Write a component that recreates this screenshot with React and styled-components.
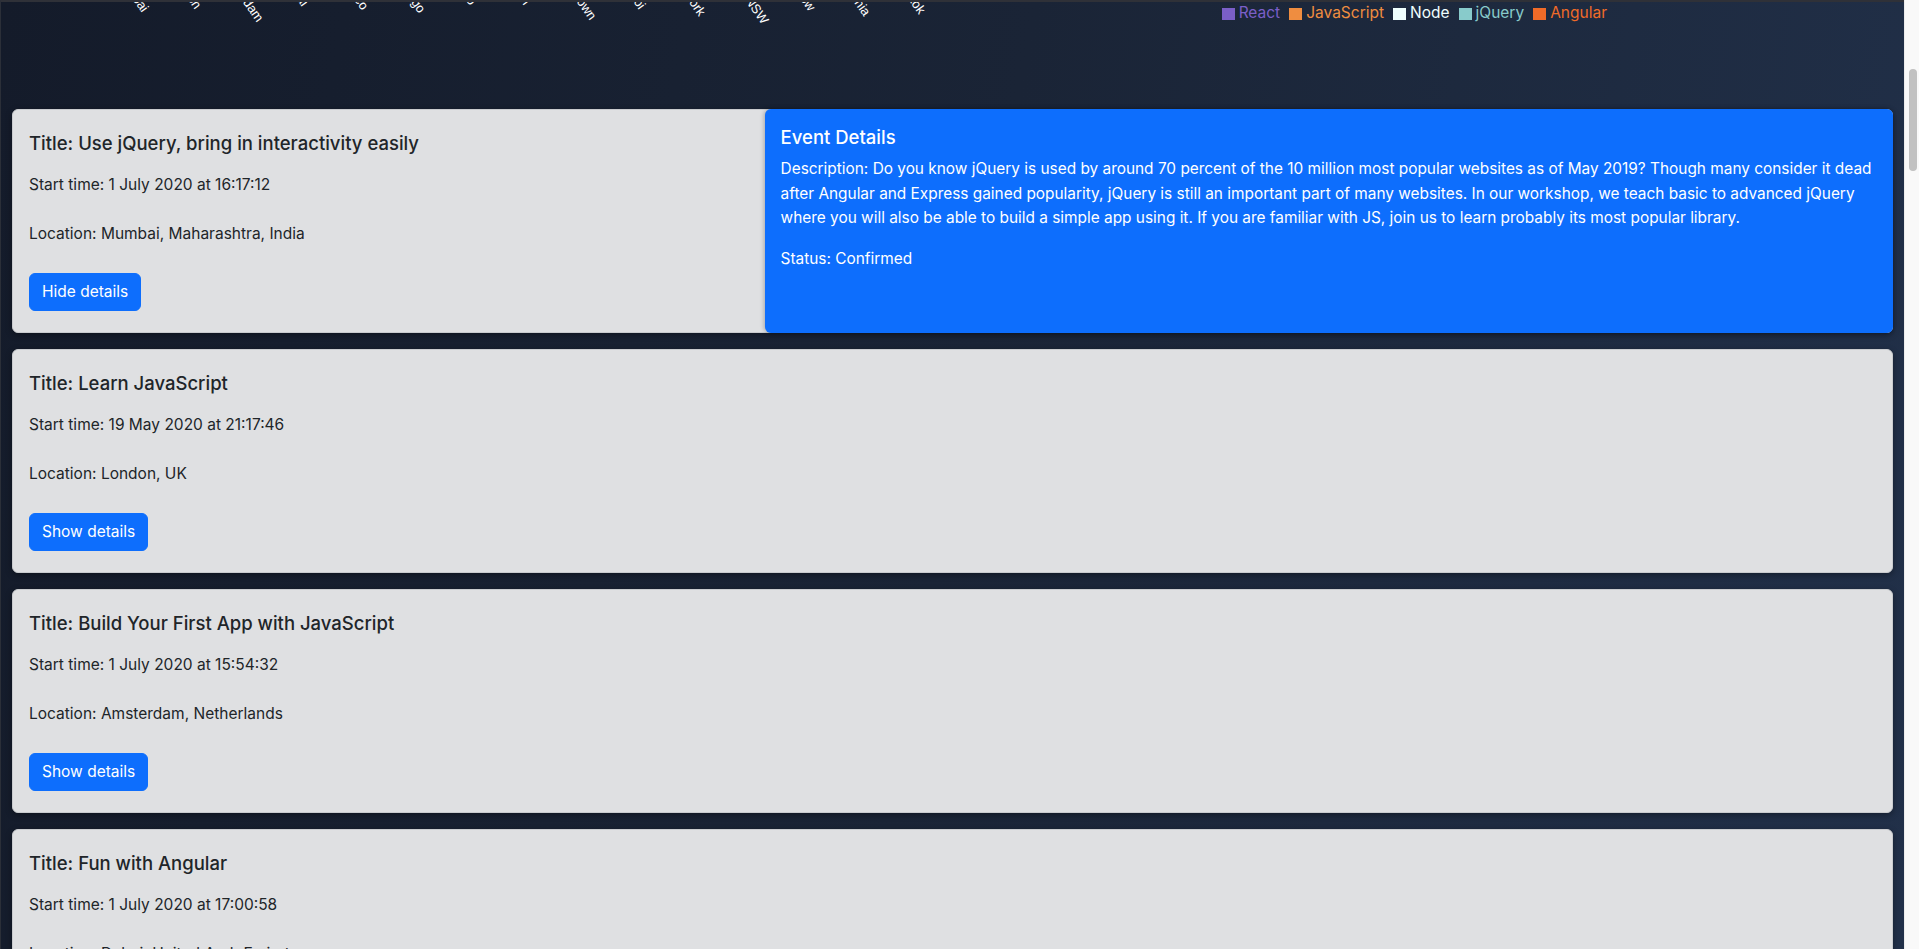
import React, { useState } from 'react'
import styled, { createGlobalStyle } from 'styled-components'

const GlobalStyle = createGlobalStyle`
    html, body {
        margin : 0;
        padding : 0;
        height : 100%;
        overflow : hidden;
    }
    body {
        font-family : Inter, "Noto Sans", "Liberation Sans", sans-serif;
        color : #212529;
    }
`;

const Frame = styled.div`
    display : flex;
    height : 100vh;
`;

const Page = styled.div`
    flex : 1;
    min-width : 0;
    overflow : hidden;
    background : linear-gradient(100deg, #141b2a 0%, #1a2436 50%, #213049 100%);
    border-top : 2px solid #2f3138;
    border-left : 1px solid #2b2f38;
    box-sizing : border-box;
`;

// window scrollbar, page is scrolled a little way down
const ScrollTrack = styled.div`
    flex : 0 0 15px;
    background : #f9f9f9;
    border-left : 1px solid #ececec;
    box-sizing : border-box;
    display : flex;
    justify-content : center;
`;

const ScrollThumb = styled.div`
    width : 8px;
    height : 102px;
    margin-top : 69px;
    margin-left : 2px;
    border-radius : 4px;
    background : #c1c1c1;
`;

const ChartStrip = styled.div`
    display : flex;
    align-items : flex-start;
    height : 107px;
    overflow : hidden;
`;

const AxisSvg = styled.svg`
    flex : 0 0 960px;
    height : 40px;
    display : block;
`;

const AxisLabel = styled.text`
    fill : #ffffff;
    font-size : 13px;
    font-family : "Liberation Sans", Arial, sans-serif;
`;

const Legend = styled.div`
    display : flex;
    align-items : center;
    gap : 9px;
    margin-left : auto;
    margin-right : 297px;
    line-height : 22px;
    font-size : 15.5px;
`;

const LegendItem = styled.span`
    display : flex;
    align-items : center;
    gap : 4px;
    color : ${props => props.color};
`;

const Swatch = styled.span`
    width : 13px;
    height : 12px;
    background : ${props => props.color};
    display : inline-block;
    margin-top : 2px;
`;

const CardList = styled.div`
    display : flex;
    flex-direction : column;
    gap : 16px;
    padding : 0 11px 16px 11px;
`;

const Card = styled.div`
    display : flex;
    background-color : #dfe0e2;
    border : 1px solid #c9cbce;
    border-radius : 6px;
    box-shadow : 0 2px 6px rgba(0, 0, 0, 0.35);
`;

const CardBody = styled.div`
    flex : 0 0 40%;
    padding : 21px 16px;
    box-sizing : border-box;
`;

const Title = styled.h5`
    font-size : 18.5px;
    font-weight : 500;
    line-height : 24px;
    margin : 0 0 18px 0;
`;

const Line = styled.p`
    font-size : 15.5px;
    line-height : 24px;
    margin : 0 0 ${props => props.gap}px 0;
`;

const DetailButton = styled.button`
    font-family : inherit;
    font-size : 15.5px;
    line-height : 24px;
    padding : 6px 12px;
    color : #ffffff;
    background-color : #0d6efd;
    border : 1px solid #0d6efd;
    border-radius : 6px;
    cursor : pointer;
`;

const Details = styled.div`
    flex : 1;
    margin : -1px -1px -1px 0;
    padding : 16px 5px 16px 16px;
    background-color : #0d6efd;
    color : #ffffff;
    border-radius : 6px;
    box-shadow : -1px 0 4px rgba(0, 0, 0, 0.25);
`;

const DetailsTitle = styled.h5`
    font-size : 18.5px;
    font-weight : 500;
    line-height : 24px;
    margin : 0 0 8px 0;
`;

const DetailsText = styled.p`
    font-size : 15.4px;
    line-height : 24.5px;
    margin : 0 0 16px 0;
`;

const cities = [
    ['Mumbai', 141, 11], ['London', 194, 8], ['Amsterdam', 256, 21], ['Dubai', 301, 5],
    ['San Francisco', 361, 9], ['Chicago', 418, 12], ['Toronto', 469, 4], ['Berlin', 523, 4],
    ['Cape Town', 589, 19], ['Hanoi', 638, 8], ['New York', 698, 15], ['Sydney, NSW', 761, 23],
    ['Moscow', 808, 10], ['California', 863, 15], ['Bangkok', 918, 13],
];

const legend = [
    ['React', '#7b5fc8'],
    ['JavaScript', '#ef8d40'],
    ['Node', '#f0fffe'],
    ['jQuery', '#88cbcb'],
    ['Angular', '#f06b28'],
];

const events = [
    {
        title : 'Use jQuery, bring in interactivity easily',
        start : '1 July 2020 at 16:17:12',
        location : 'Mumbai, Maharashtra, India',
        description : 'Do you know jQuery is used by around 70 percent of the 10 million most popular websites as of May 2019? Though many consider it dead after Angular and Express gained popularity, jQuery is still an important part of many websites. In our workshop, we teach basic to advanced jQuery where you will also be able to build a simple app using it. If you are familiar with JS, join us to learn probably its most popular library.',
        status : 'Confirmed',
    },
    { title : 'Learn JavaScript', start : '19 May 2020 at 21:17:46', location : 'London, UK', description : 'A beginner friendly walk through modern JavaScript.', status : 'Confirmed' },
    { title : 'Build Your First App with JavaScript', start : '1 July 2020 at 15:54:32', location : 'Amsterdam, Netherlands', description : 'Build and ship a small app from scratch.', status : 'Confirmed' },
    { title : 'Fun with Angular', start : '1 July 2020 at 17:00:58', location : 'Dubai, United Arab Emirates', description : 'Components, services and routing in Angular.', status : 'Confirmed' },
    { title : 'Getting started with React', start : '2 July 2020 at 10:30:00', location : 'San Francisco, CA, USA', description : 'Hooks, state and props.', status : 'Confirmed' },
];

const EventCard = ({ event, open, onToggle }) => (
    <Card>
        <CardBody>
            <Title>Title: {event.title}</Title>
            <Line gap={25}>Start time: {event.start}</Line>
            <Line gap={27}>Location: {event.location}</Line>
            <DetailButton onClick={onToggle}>{open ? 'Hide details' : 'Show details'}</DetailButton>
        </CardBody>
        {open && (
            <Details>
                <DetailsTitle>Event Details</DetailsTitle>
                <DetailsText>Description: {event.description}</DetailsText>
                <DetailsText>Status: {event.status}</DetailsText>
            </Details>
        )}
    </Card>
);

const App = () => {
    const [openIndex, setOpenIndex] = useState(0);

    return (
        <>
            <GlobalStyle />
            <Frame>
                <Page>
                    <ChartStrip>
                        <AxisSvg viewBox="0 0 960 40">
                            {cities.map(([name, x, y]) => (
                                <AxisLabel key={name} textAnchor="end" transform={`translate(${x},${y}) rotate(55)`}>{name}</AxisLabel>
                            ))}
                        </AxisSvg>
                        <Legend>
                            {legend.map(([name, color]) => (
                                <LegendItem key={name} color={color}>
                                    <Swatch color={color} />
                                    {name}
                                </LegendItem>
                            ))}
                        </Legend>
                    </ChartStrip>
                    <CardList>
                        {events.map((ev, i) => (
                            <EventCard key={ev.title} event={ev} open={openIndex === i} onToggle={() => setOpenIndex(openIndex === i ? -1 : i)} />
                        ))}
                    </CardList>
                </Page>
                <ScrollTrack>
                    <ScrollThumb />
                </ScrollTrack>
            </Frame>
        </>
    );
};

export default App;
